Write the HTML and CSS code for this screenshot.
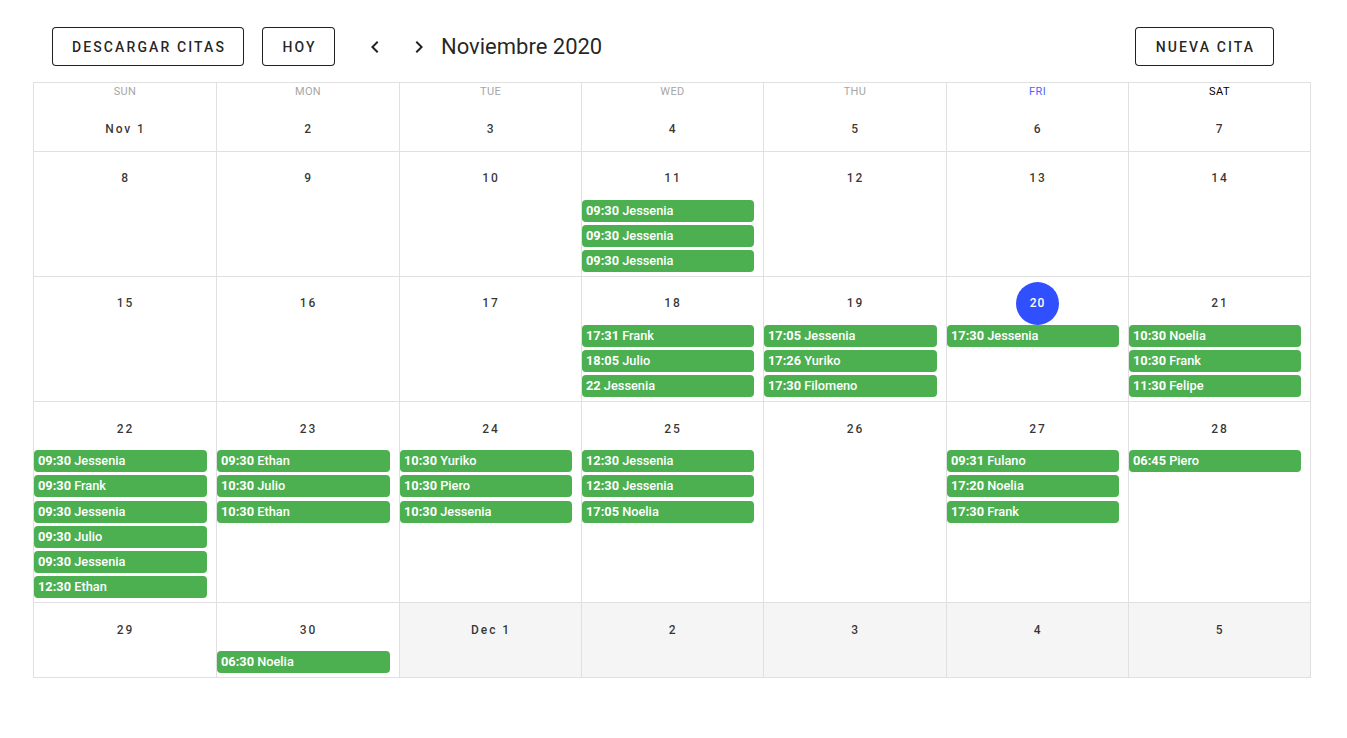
FILE: index.html
```html
<!DOCTYPE html>
<html lang="es">
<head>
<meta charset="utf-8">
<title>Calendario</title>
<link rel="stylesheet" href="styles.css">
</head>
<body>
<div class="page">
  <div class="toolbar">
    <button class="btn btn-download">Descargar citas</button>
    <button class="btn btn-today">Hoy</button>
    <button class="icon-btn icon-prev" aria-label="prev">
      <svg viewBox="0 0 24 24" width="24" height="24"><path d="M15.41,16.58L10.83,12L15.41,7.41L14,6L8,12L14,18L15.41,16.58Z"/></svg>
    </button>
    <button class="icon-btn icon-next" aria-label="next">
      <svg viewBox="0 0 24 24" width="24" height="24"><path d="M8.59,16.58L13.17,12L8.59,7.41L10,6L16,12L10,18L8.59,16.58Z"/></svg>
    </button>
    <div class="title">Noviembre 2020</div>
    <div class="spacer"></div>
    <button class="btn btn-new">Nueva cita</button>
  </div>

  <div class="calendar">
    <div class="head">
      <div class="weekday past">Sun</div>
      <div class="weekday past">Mon</div>
      <div class="weekday past">Tue</div>
      <div class="weekday past">Wed</div>
      <div class="weekday past">Thu</div>
      <div class="weekday present">Fri</div>
      <div class="weekday">Sat</div>
    </div>

    <div class="week">
      <div class="day"><div class="label">Nov 1</div></div>
      <div class="day"><div class="label">2</div></div>
      <div class="day"><div class="label">3</div></div>
      <div class="day"><div class="label">4</div></div>
      <div class="day"><div class="label">5</div></div>
      <div class="day"><div class="label">6</div></div>
      <div class="day"><div class="label">7</div></div>
    </div>

    <div class="week">
      <div class="day"><div class="label">8</div></div>
      <div class="day"><div class="label">9</div></div>
      <div class="day"><div class="label">10</div></div>
      <div class="day"><div class="label">11</div>
        <div class="event"><strong>09:30</strong> Jessenia</div>
        <div class="event"><strong>09:30</strong> Jessenia</div>
        <div class="event"><strong>09:30</strong> Jessenia</div>
      </div>
      <div class="day"><div class="label">12</div></div>
      <div class="day"><div class="label">13</div></div>
      <div class="day"><div class="label">14</div></div>
    </div>

    <div class="week">
      <div class="day"><div class="label">15</div></div>
      <div class="day"><div class="label">16</div></div>
      <div class="day"><div class="label">17</div></div>
      <div class="day"><div class="label">18</div>
        <div class="event"><strong>17:31</strong> Frank</div>
        <div class="event"><strong>18:05</strong> Julio</div>
        <div class="event"><strong>22</strong> Jessenia</div>
      </div>
      <div class="day"><div class="label">19</div>
        <div class="event"><strong>17:05</strong> Jessenia</div>
        <div class="event"><strong>17:26</strong> Yuriko</div>
        <div class="event"><strong>17:30</strong> Filomeno</div>
      </div>
      <div class="day"><div class="label"><span class="today">20</span></div>
        <div class="event"><strong>17:30</strong> Jessenia</div>
      </div>
      <div class="day"><div class="label">21</div>
        <div class="event"><strong>10:30</strong> Noelia</div>
        <div class="event"><strong>10:30</strong> Frank</div>
        <div class="event"><strong>11:30</strong> Felipe</div>
      </div>
    </div>

    <div class="week">
      <div class="day"><div class="label">22</div>
        <div class="event"><strong>09:30</strong> Jessenia</div>
        <div class="event"><strong>09:30</strong> Frank</div>
        <div class="event"><strong>09:30</strong> Jessenia</div>
        <div class="event"><strong>09:30</strong> Julio</div>
        <div class="event"><strong>09:30</strong> Jessenia</div>
        <div class="event"><strong>12:30</strong> Ethan</div>
      </div>
      <div class="day"><div class="label">23</div>
        <div class="event"><strong>09:30</strong> Ethan</div>
        <div class="event"><strong>10:30</strong> Julio</div>
        <div class="event"><strong>10:30</strong> Ethan</div>
      </div>
      <div class="day"><div class="label">24</div>
        <div class="event"><strong>10:30</strong> Yuriko</div>
        <div class="event"><strong>10:30</strong> Piero</div>
        <div class="event"><strong>10:30</strong> Jessenia</div>
      </div>
      <div class="day"><div class="label">25</div>
        <div class="event"><strong>12:30</strong> Jessenia</div>
        <div class="event"><strong>12:30</strong> Jessenia</div>
        <div class="event"><strong>17:05</strong> Noelia</div>
      </div>
      <div class="day"><div class="label">26</div></div>
      <div class="day"><div class="label">27</div>
        <div class="event"><strong>09:31</strong> Fulano</div>
        <div class="event"><strong>17:20</strong> Noelia</div>
        <div class="event"><strong>17:30</strong> Frank</div>
      </div>
      <div class="day"><div class="label">28</div>
        <div class="event"><strong>06:45</strong> Piero</div>
      </div>
    </div>

    <div class="week">
      <div class="day"><div class="label">29</div></div>
      <div class="day"><div class="label">30</div>
        <div class="event"><strong>06:30</strong> Noelia</div>
      </div>
      <div class="day outside"><div class="label">Dec 1</div></div>
      <div class="day outside"><div class="label">2</div></div>
      <div class="day outside"><div class="label">3</div></div>
      <div class="day outside"><div class="label">4</div></div>
      <div class="day outside"><div class="label">5</div></div>
    </div>
  </div>
</div>
</body>
</html>
```

FILE: styles.css
```css
* { box-sizing: border-box; }

html, body {
  margin: 0;
  padding: 0;
  background: #fff;
  font-family: Roboto, "Liberation Sans", Arial, sans-serif;
  color: rgba(0, 0, 0, 0.87);
}

.page {
  margin-left: 33px;
  width: 1278px;
}

.toolbar {
  display: flex;
  align-items: center;
  padding: 27px 37px 16px 19px;
}

.btn {
  height: 39px;
  padding: 0;
  min-width: 64px;
  background: #fff;
  border: 1px solid rgba(0, 0, 0, 0.87);
  border-radius: 4px;
  font-family: Roboto, "Liberation Sans", Arial, sans-serif;
  font-size: 14px;
  font-weight: 500;
  letter-spacing: 2.1px;
  text-indent: 2px;
  text-transform: uppercase;
  color: rgba(0, 0, 0, 0.87);
  cursor: pointer;
}

.btn-download { width: 192px; }
.btn-today { width: 73px; margin-left: 18px; }
.btn-new { width: 139px; }

.icon-btn {
  width: 36px;
  height: 36px;
  padding: 0;
  border: 0;
  background: transparent;
  display: flex;
  align-items: center;
  justify-content: center;
  cursor: pointer;
}

.icon-btn svg { fill: rgba(0, 0, 0, 0.87); }

.icon-prev { margin-left: 22px; }
.icon-next { margin-left: 8px; }

.title {
  margin-left: 4px;
  font-size: 22px;
  font-weight: 400;
  color: rgba(0, 0, 0, 0.87);
  white-space: nowrap;
}

.spacer { flex: 1; }

.calendar {
  border-top: 1px solid #e0e0e0;
  border-right: 1px solid #e0e0e0;
}

.head,
.week {
  display: grid;
  grid-template-columns: 183px 183px 182px 182px 183px 182px 182px;
}

.weekday {
  height: 19px;
  line-height: 17px;
  padding-bottom: 2px;
  text-align: center;
  font-size: 11px;
  letter-spacing: 0.4px;
  text-transform: uppercase;
  border-left: 1px solid #e0e0e0;
  color: #000;
}

.weekday.past { color: #a6a6a6; }
.weekday.present { color: #4d66fb; }

.day {
  border-left: 1px solid #e0e0e0;
  border-bottom: 1px solid #e0e0e0;
  padding-top: 5px;
  padding-bottom: 0.7px;
  min-width: 0;
}

.day.outside { background: #f5f5f5; }

.label {
  height: 43px;
  margin-bottom: 0;
  display: flex;
  align-items: center;
  justify-content: center;
  font-size: 12px;
  font-weight: 500;
  letter-spacing: 1.9px;
  text-indent: 1px;
  color: rgba(0, 0, 0, 0.8);
}

.today {
  width: 43px;
  height: 43px;
  border-radius: 50%;
  background: #304ffe;
  color: #fff;
  display: flex;
  align-items: center;
  justify-content: center;
  letter-spacing: 1px;
  text-indent: 0;
}

.event {
  width: 95%;
  height: 22px;
  line-height: 22px;
  margin-bottom: 3.2px;
  padding-left: 4px;
  background: #4caf50;
  border-radius: 4px;
  color: #fff;
  font-size: 12.8px;
  font-weight: 500;
  white-space: nowrap;
  overflow: hidden;
}

.event strong { font-weight: 700; }
```
